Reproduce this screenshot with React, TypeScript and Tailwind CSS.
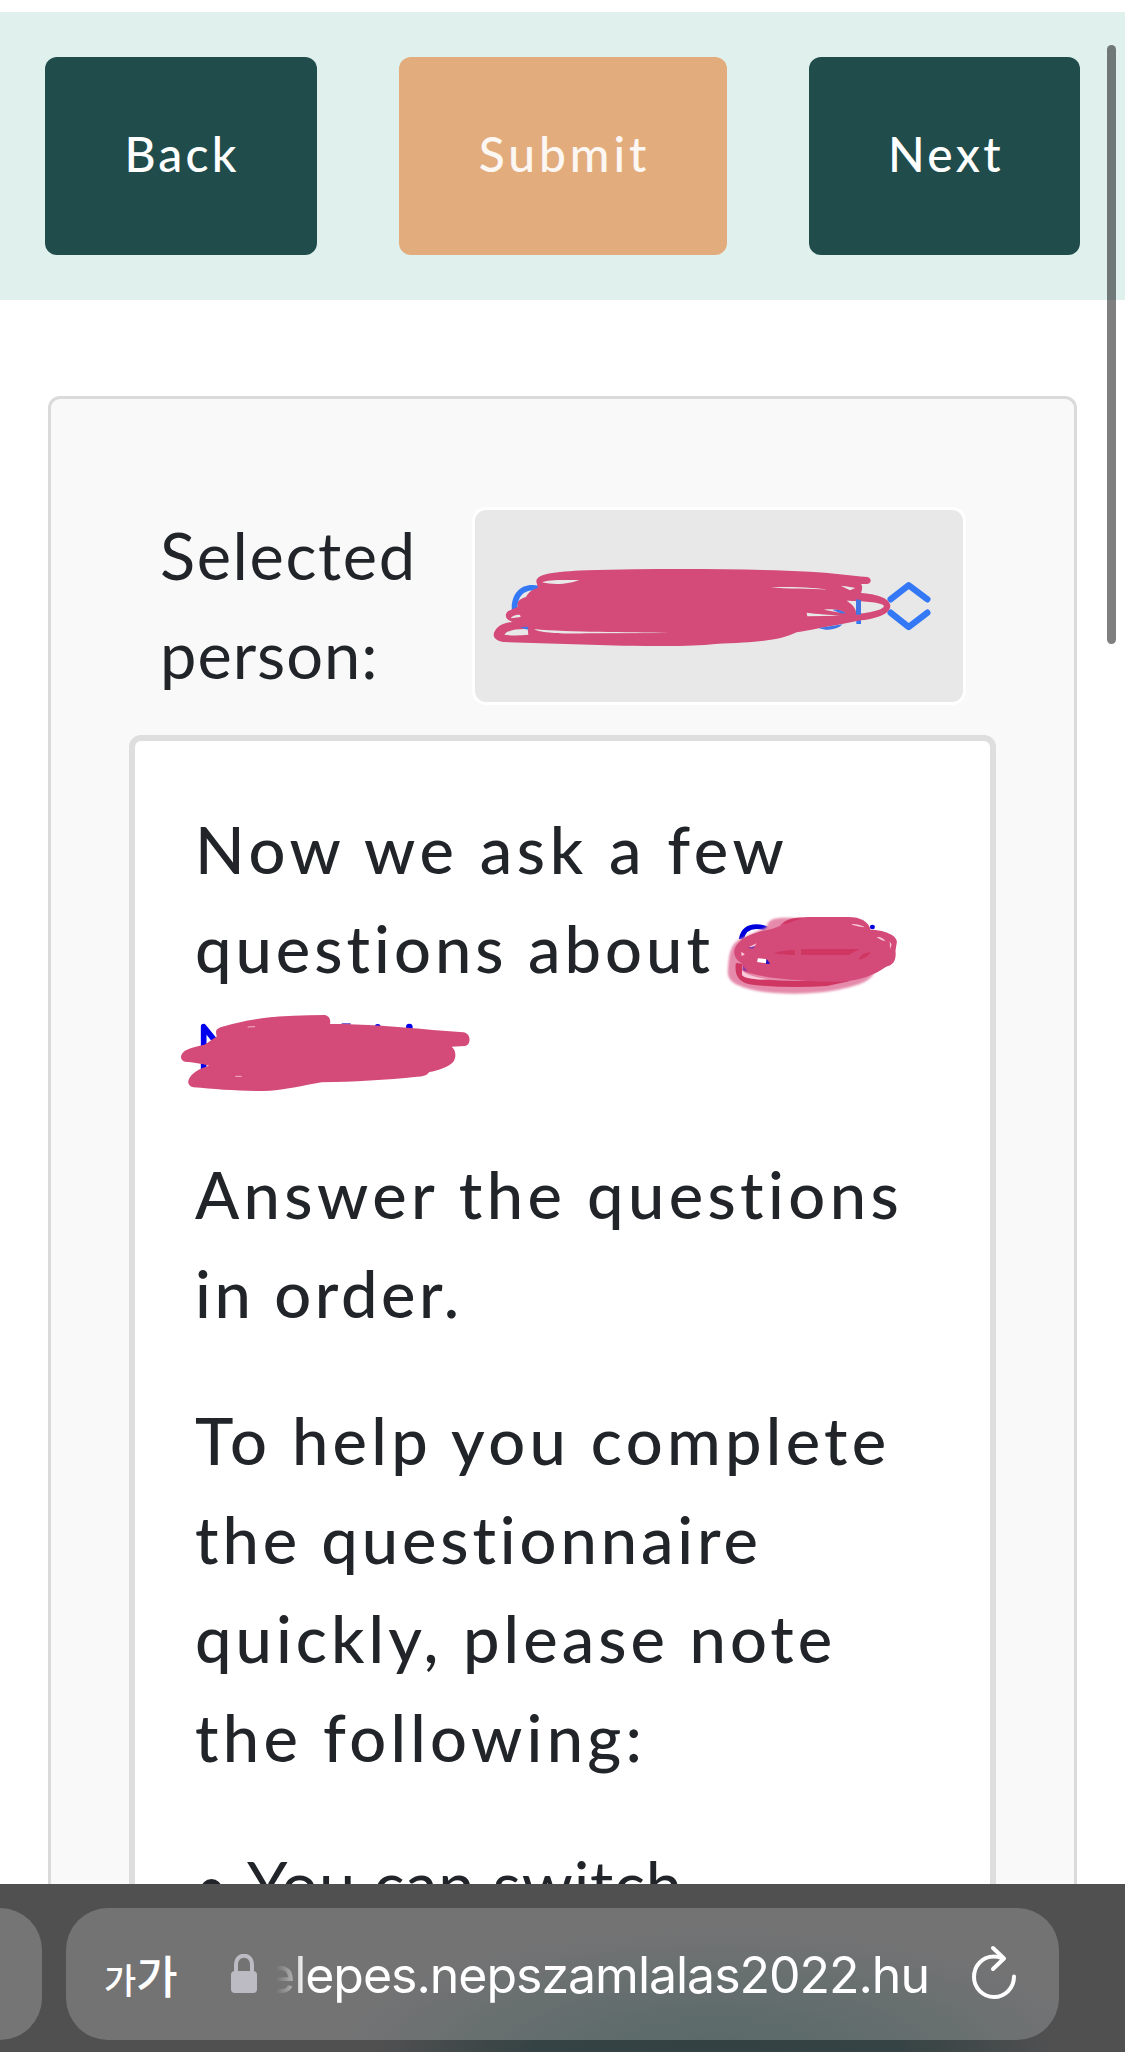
interface Line {
  text: string;
  tracking: string;
}

const orderLines: Line[] = [
  { text: "Answer the questions", tracking: "tracking-[4.4px]" },
  { text: "in order.", tracking: "tracking-[3.55px]" },
];

const helpLines: Line[] = [
  { text: "To help you complete", tracking: "tracking-[4.3px]" },
  { text: "the questionnaire", tracking: "tracking-[3.9px]" },
  { text: "quickly, please note", tracking: "tracking-[4.07px]" },
  { text: "the following:", tracking: "tracking-[4.3px]" },
];

function Lines({ lines }: { lines: Line[] }) {
  return (
    <p className="mb-12">
      {lines.map((line) => (
        <span key={line.text} className={`block whitespace-nowrap ${line.tracking}`}>
          {line.text}
        </span>
      ))}
    </p>
  );
}

function Toolbar() {
  return (
    <header className="mt-3 h-72 shrink-0 bg-[#dff0ed] pl-[45px] pr-[45px] flex items-center justify-between text-[48px] font-medium text-white">
      <button className="h-[198px] w-[272px] rounded-[12px] bg-[#204d4c] pl-[2px] pb-[4px] tracking-[3.2px]">
        Back
      </button>
      <button className="h-[198px] w-[328px] rounded-[12px] bg-[#e3ac7d] pl-[3px] pb-[4px] tracking-[3.9px] text-[#fcf7f2]">
        Submit
      </button>
      <button className="h-[198px] w-[271px] rounded-[12px] bg-[#204d4c] pl-[3px] pb-[4px] tracking-[3.3px]">
        Next
      </button>
    </header>
  );
}

function SelectScribble() {
  return (
    <svg
      className="absolute left-[-15px] top-[-20px] h-[230px] w-[520px]"
      viewBox="0 0 1560 690"
      fill="none"
    >
      <path d="M1196 290V402" stroke="#3478f6" strokeWidth="14" />
      <path
        d="M1292 328L1346 286L1402 328M1292 368L1346 411L1402 368"
        stroke="#3478f6"
        strokeWidth="19"
        strokeLinecap="round"
        strokeLinejoin="round"
      />
      <path
        fill="#d44a79"
        d="M229 275C229 252 280 245 380 241C600 235 860 236 1050 245C1110 248 1170 257 1222 261C1236 264 1235 280 1222 282L1203 282C1209 290 1206 300 1203 309C1250 312 1290 325 1291 348C1290 374 1245 387 1195 392L1150 401C1100 410 1050 420 1010 427C960 451 900 457 765 462C700 470 600 468 490 467L130 456C90 449 98 425 115 410C126 401 145 396 158 396C134 388 133 372 145 363L174 350C168 335 180 326 198 321C204 307 218 298 234 293Z"
      />
      <path
        fill="#e8e8e8"
        d="M246 277C262 268 310 270 358 270C335 279 290 288 246 277ZM152 385C158 377 170 373 180 375L182 381ZM133 434C142 420 172 416 203 417L205 434C180 437 150 437 133 434ZM222 417C240 430 320 432 380 430L628 429C500 425 330 428 222 417ZM932 292C1010 289 1080 295 1102 299C1050 296 980 297 932 292ZM1142 287C1160 289 1180 292 1186 294L1170 301ZM1160 332C1200 334 1265 334 1272 348C1266 363 1225 367 1188 373C1190 354 1175 342 1160 332ZM1040 368C1070 372 1110 374 1140 377L1042 379ZM1092 359C1115 356 1144 360 1154 369C1135 368 1112 363 1092 359Z"
      />
      <path
        d="M1188 328V374H1203V330Z M1118 360C1138 358 1152 364 1156 371L1140 369Z M1076 414C1100 423 1130 421 1148 403L1120 407Z M181 411C190 417 199 419 205 418L204 410Z"
        fill="#4275e4"
      />
    </svg>
  );
}

function FirstNameScribble() {
  return (
    <svg
      className="absolute left-[425px] top-[59px] h-[300px] w-[565px]"
      viewBox="0 0 1568 900"
      preserveAspectRatio="none"
      fill="none"
    >
      <defs>
        <filter id="soft" x="-10%" y="-10%" width="120%" height="120%">
          <feGaussianBlur stdDeviation="3" />
        </filter>
      </defs>
      <path d="M503 418C508 390 525 380 545 380C556 380 568 382 580 390" stroke="#0000dd" strokeWidth="14" />
      <circle cx="867" cy="381" r="7" fill="#0000dd" />
      <path
        filter="url(#soft)"
        fill="#e58aab"
        d="M573 382C578 358 590 352 640 353L700 360L880 500C866 548 830 552 790 565C720 586 590 586 525 567C480 553 463 540 466 510C469 470 470 430 505 415Z"
      />
      <path d="M497 490C492 525 505 543 540 546C600 552 670 554 740 549L800 535" stroke="#cf3661" strokeWidth="18" />
      <path
        fill="#d44a79"
        d="M610 378C625 356 650 352 690 351H800C835 351 856 365 862 389C900 390 934 405 935 425L931 452C934 480 925 496 905 500C875 523 835 541 780 545C690 546 570 537 510 514L505 490C480 475 478 450 493 431C515 405 550 395 590 386Z"
      />
      <path
        fill="#cf3661"
        d="M595 459C620 451 640 450 652 450V465C630 463 610 464 595 459ZM669 447H832L800 465H669ZM828 477C838 462 848 458 862 457C855 470 843 474 835 478ZM618 373C630 357 650 354 672 356C655 359 640 368 618 373Z"
      />
      <path
        fill="#f7c9da"
        d="M808 372C825 372 840 376 845 382C830 380 815 377 808 372ZM878 411C890 410 900 416 903 424C892 422 886 416 878 411ZM915 423L920 434L916 447ZM505 510C515 524 540 532 580 538C545 540 510 535 505 525ZM503 455L513 463L504 469ZM525 440L546 430L536 445Z"
      />
      <path fill="#ffffff" d="M549 475L572 477V490L547 486Z" />
      <path fill="#1c10cf" d="M574 477L583 491L571 492Z" />
      <path fill="#8a3ba8" d="M520 443L542 438L536 447ZM508 497L520 513L507 511Z" />
    </svg>
  );
}

function LastNameScribble() {
  return (
    <svg
      className="absolute left-[35px] top-[59px] h-[300px] w-[400px]"
      viewBox="0 0 1200 900"
      fill="none"
    >
      <path
        d="M101 810V680L140 728"
        stroke="#0000ee"
        strokeWidth="17"
        strokeLinecap="round"
        strokeLinejoin="round"
      />
      <circle cx="623" cy="681" r="9" fill="#0000ee" />
      <circle cx="718" cy="681" r="10" fill="#0000ee" />
      <path d="M515 672H542" stroke="#3a20c0" strokeWidth="4" />
      <path
        fill="#d44a79"
        d="M138 697C138 685 150 682 165 678C250 652 350 645 465 645C478 648 483 660 480 672C580 672 690 680 788 690L880 697C903 700 905 733 885 738L845 740C860 752 858 775 850 785C835 801 805 811 778 816C770 828 755 830 740 830C650 840 550 845 455 847C400 857 340 870 300 872C220 875 140 868 70 862C48 855 53 838 65 825C78 811 95 804 117 797C95 790 70 787 45 785C28 780 30 762 45 752C65 742 85 738 103 734C115 727 125 718 140 710Z"
      />
      <path d="M233 681L255 680M196 829L215 829" stroke="#f0b5ca" strokeWidth="3" />
    </svg>
  );
}

function BrowserBar() {
  return (
    <footer className="flex h-[168px] shrink-0 items-start gap-6 overflow-hidden bg-[#505051] bg-[radial-gradient(ellipse_340px_80px_at_715px_170px,#324142_0%,#364344_55%,transparent_100%)] pt-6">
      <div className="h-[132px] w-[42px] shrink-0 rounded-r-[42px] bg-[#757575]" />
      <div className="flex h-[132px] w-[993px] shrink-0 items-center rounded-[42px] bg-[#737374] bg-[radial-gradient(ellipse_380px_130px_at_650px_150px,#596968_0%,#5f6c6b_35%,transparent_100%)] pl-[38px] text-white">
        <div className="flex w-[76px] items-baseline font-['Noto_Sans_CJK_KR'] leading-none font-medium">
          <span className="text-[35px]">가</span>
          <span className="text-[45px]">가</span>
        </div>
        <svg className="ml-[51px] h-[40px] w-[26px]" viewBox="0 0 26 40" fill="none">
          <path d="M5 18V11C5 -1.500 21 -1.500 21 11V18" stroke="#bcbbc3" strokeWidth="4" />
          <rect y="17" width="26" height="22" rx="4" fill="#bcbbc3" />
        </svg>
        <span className="ml-[9px] mt-[2px] w-[663px] whitespace-nowrap font-['Inter'] text-[50px] leading-[60px] tracking-[-1.02px] [mask-image:linear-gradient(to_right,transparent_10px,rgba(0,0,0,0.4)_26px,rgba(0,0,0,0.75)_33px,black_39px)]">
          elepes.nepszamlalas2022.hu
        </span>
        <svg
          className="ml-[42px] mb-[2px] h-[56px] w-[46px]"
          viewBox="0 0 46 56"
          fill="none"
          stroke="#ffffff"
          strokeWidth="4"
          strokeLinecap="round"
          strokeLinejoin="round"
        >
          <path d="M31 13C28 12 25 11.500 23 11.500C11 11.500 3 21 3 32C3 43 12 52 23 52C34 52 43 43 43 31.500" />
          <path d="M22 3L33 13.500L22 24" />
        </svg>
      </div>
    </footer>
  );
}

export default function App() {
  return (
    <div className="relative flex h-[2052px] w-[1125px] flex-col overflow-hidden bg-white font-['Lato',sans-serif] text-[#212529]">
      <Toolbar />

      <main className="min-h-0 flex-1 overflow-hidden pt-24 pl-12">
        <section className="h-[1700px] w-[1029px] rounded-[12px] border-[3px] border-[#dadada] bg-[#f9f9f9] pt-[105px] pl-[78px] text-[65px] leading-[99px]">
          <div className="flex">
            <label className="mt-[2px] ml-[31px] mb-[31px] w-[312px]">
              <span className="block tracking-[1.6px]">Selected</span>
              <span className="block tracking-[0.95px]">person:</span>
            </label>
            <div className="relative mt-[3px] h-[198px] w-[494px] rounded-[14px] border-[3px] border-white bg-[#e8e8e8]">
              <span className="absolute left-[33px] top-[60px] font-['Inter'] text-[63px] leading-[76px] text-[#3478f6]">
                C
              </span>
              <SelectScribble />
            </div>
          </div>

          <div className="relative h-[1400px] w-[867px] rounded-[12px] border-[6px] border-[#dedede] bg-white pt-[59px] pl-[60px] font-medium">
            <p className="mb-12 h-[297px]">
              <span className="block whitespace-nowrap tracking-[4.67px]">Now we ask a few</span>
              <span className="block whitespace-nowrap tracking-[4.02px]">questions about</span>
            </p>
            <Lines lines={orderLines} />
            <Lines lines={helpLines} />
            <ul className="flex items-start font-normal">
              <li className="flex tracking-[0.8px] whitespace-nowrap">
                <span className="mt-[44px] ml-[6px] mr-[25px] h-[21px] w-[21px] rounded-full bg-[#212529]" />
                You can switch
              </li>
            </ul>
            <FirstNameScribble />
            <LastNameScribble />
          </div>
        </section>
      </main>

      <BrowserBar />
      <div className="absolute left-[1107px] top-[45px] h-[599px] w-[9px] rounded-full bg-black/50" />
    </div>
  );
}
